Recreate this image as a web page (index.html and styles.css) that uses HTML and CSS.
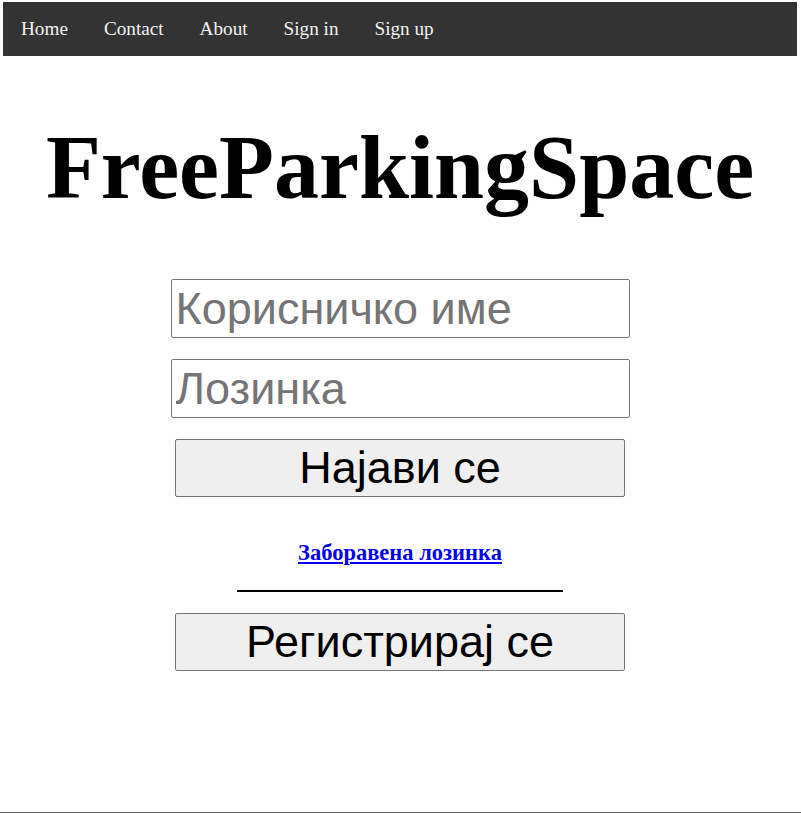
FILE: index.html
```html
<!DOCTYPE html>
<html lang="sr">
<head>
<meta charset="utf-8">
<title>FreeParkingSpace</title>
<link rel="stylesheet" href="styles.css">
</head>
<body>
<nav class="topnav">
  <a href="#">Home</a>
  <a href="#">Contact</a>
  <a href="#">About</a>
  <a href="#">Sign in</a>
  <a href="#">Sign up</a>
</nav>
<main class="page">
  <h1 class="title">FreeParkingSpace</h1>
  <form class="login">
    <input class="field" type="text" placeholder="Корисничко име">
    <input class="field" type="password" placeholder="Лозинка">
    <button class="btn" type="button">Најави се</button>
  </form>
  <a class="forgot" href="#">Заборавена лозинка</a>
  <div class="divider"></div>
  <button class="btn" type="button">Регистрирај се</button>
</main>
<footer class="footer"></footer>
</body>
</html>
```
FILE: styles.css
```css
html, body {
  background: #fff;
}
body {
  margin: 2px 4px 0 3px;
  font-family: "Liberation Serif", "Times New Roman", serif;
}
.topnav {
  display: flex;
  background: #333;
}
.topnav a {
  display: block;
  padding: 16px 18px;
  color: #f2f2f2;
  text-decoration: none;
  font-size: 19.2px;
  line-height: 22px;
}
.page {
  display: flex;
  flex-direction: column;
  align-items: center;
}
.title {
  margin: 60px 0 60px;
  font-size: 90px;
  line-height: 103px;
  font-weight: bold;
  color: #000;
}
.login {
  display: flex;
  flex-direction: column;
  align-items: center;
  gap: 21px;
  margin: 0;
}
.field {
  box-sizing: border-box;
  width: 459px;
  height: 59px;
  margin: 0;
  padding: 3px 4px;
  border: 1px solid #767676;
  border-radius: 2px;
  font-family: "Liberation Sans", Arial, sans-serif;
  font-size: 45px;
  color: #000;
  background: #fff;
  outline: none;
}
.field::placeholder {
  color: #757575;
  opacity: 1;
}
.btn {
  box-sizing: border-box;
  width: 450px;
  height: 58px;
  margin: 0;
  padding: 0 6px;
  border: 1px solid #767676;
  border-radius: 2px;
  background: #efefef;
  color: #000;
  font-family: "Liberation Sans", Arial, sans-serif;
  font-size: 45px;
  line-height: 52px;
}
.forgot {
  display: block;
  margin-top: 43px;
  font-size: 22.5px;
  line-height: 25px;
  font-weight: bold;
  color: #0000ee;
  text-decoration: underline;
}
.divider {
  width: 326px;
  height: 2px;
  margin: 25px 0 21px;
  background: #000;
}
.footer {
  position: fixed;
  left: 0;
  right: 0;
  bottom: 0;
  height: 0;
  border-top: 1px solid #666;
}
```
